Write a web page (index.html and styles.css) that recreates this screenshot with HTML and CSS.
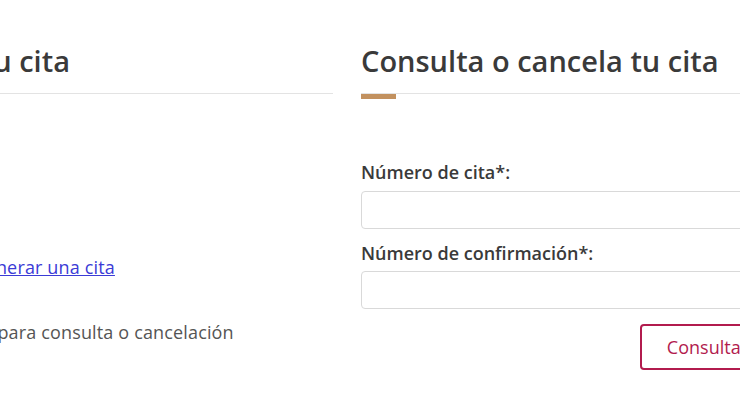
FILE: index.html
```html
<!DOCTYPE html>
<html lang="es">
<head>
<meta charset="utf-8">
<title>Citas</title>
<link rel="stylesheet" href="styles.css">
</head>
<body>
<main class="page">
  <div class="cols">
    <section class="col col-left">
      <h2 class="title">Genera tu cita</h2>
      <div class="accent"></div>
      <p class="link-line">Da clic para <a href="#" class="link">generar una cita</a></p>
      <p class="text">Captura datos para consulta o cancelación</p>
    </section>
    <section class="col col-right">
      <h2 class="title">Consulta o cancela tu cita</h2>
      <div class="accent"></div>
      <form class="form">
        <label class="label" for="cita">Número de cita*:</label>
        <input class="input" id="cita" type="text">
        <label class="label" for="conf">Número de confirmación*:</label>
        <input class="input" id="conf" type="text">
        <div class="actions">
          <button type="button" class="btn">Consultar</button>
        </div>
      </form>
    </section>
  </div>
</main>
</body>
</html>
```
FILE: styles.css
```css
html, body {
  margin: 0;
  padding: 0;
  background: #fff;
  overflow: hidden;
}
body {
  width: 740px;
  height: 417px;
  font-family: "Open Sans", "Liberation Sans", sans-serif;
  color: #3b3b3b;
}
.page {
  padding-top: 44px;
}
.cols {
  display: grid;
  grid-template-columns: 461px 414px;
  column-gap: 28px;
  margin-left: -128px;
  width: 903px;
}
.col {
  display: flex;
  flex-direction: column;
  min-width: 0;
}
.title {
  margin: 0;
  font-size: 29px;
  font-weight: 600;
  line-height: 34.8px;
  color: #3a3a3a;
  padding-bottom: 14px;
  border-bottom: 1px solid #e3e3e3;
  white-space: nowrap;
}
.accent {
  width: 35px;
  height: 5px;
  background: #c2915f;
}
.link-line {
  margin: 158.5px 0 0;
  font-size: 18px;
  line-height: 21.6px;
  letter-spacing: 0.15px;
  white-space: nowrap;
}
.link {
  color: #3b3bd6;
  text-decoration: underline;
}
.text {
  margin: 43.6px 0 0;
  font-size: 18px;
  line-height: 21.6px;
  letter-spacing: 0.15px;
  color: #555;
  white-space: nowrap;
}
.form {
  display: flex;
  flex-direction: column;
  margin-top: 63.2px;
}
.label {
  font-size: 18px;
  font-weight: 600;
  line-height: 21.6px;
  color: #3a3a3a;
}
.input {
  margin: 7px 0 14px;
  height: 38px;
  box-sizing: border-box;
  border: 1px solid #d9d9d9;
  border-radius: 4px;
  padding: 6px 12px;
  font: inherit;
  background: #fff;
}
.actions {
  display: flex;
  justify-content: flex-end;
  margin-top: 0.5px;
}
.btn {
  height: 46.5px;
  box-sizing: border-box;
  padding: 0 25px;
  border: 2px solid #b21b4e;
  border-radius: 4px;
  background: #fff;
  color: #b21b4e;
  font-family: "Open Sans", "Liberation Sans", sans-serif;
  font-size: 18px;
  font-weight: 400;
}
```
